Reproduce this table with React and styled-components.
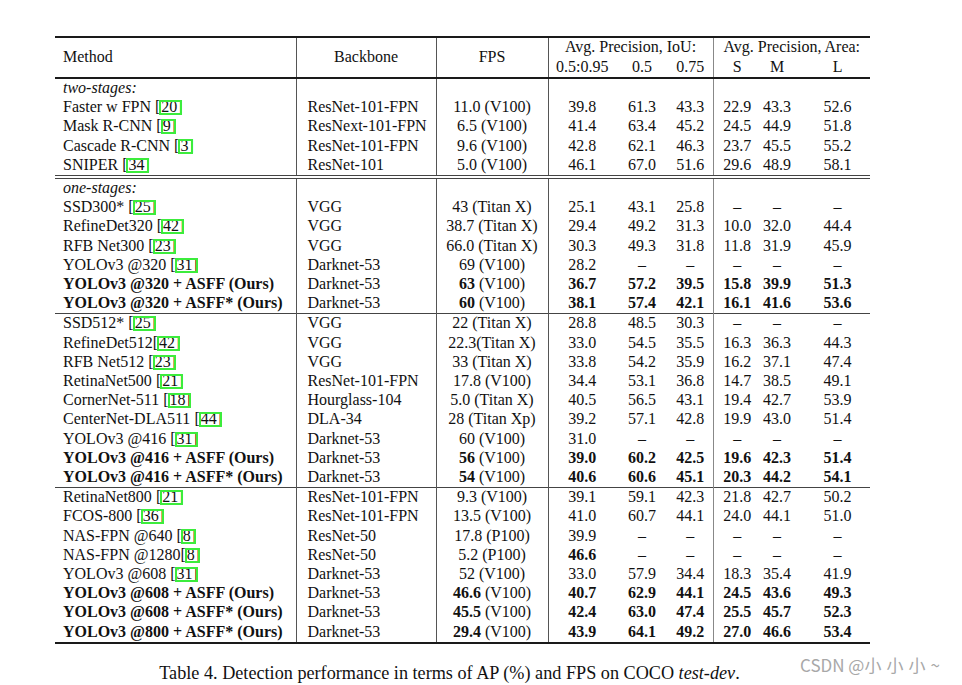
import React from "react";
import styled, { createGlobalStyle } from "styled-components";

const GlobalStyle = createGlobalStyle`
  html, body { margin: 0; padding: 0; background: #fff; }
  body { font-family: "Liberation Serif", "Times New Roman", serif; color: #111; }
`;

const Page = styled.div`
  position: relative;
  width: 962px;
  height: 685px;
  padding: 36px 0 0 55px;
  box-sizing: border-box;
  overflow: hidden;
`;

const Figure = styled.figure`
  margin: 0;
  width: 815px;
  display: flex;
  flex-direction: column;
`;

const Table = styled.table`
  width: 815px;
  table-layout: fixed;
  border-collapse: collapse;
  font-size: 16px;
  line-height: 17.2px;
  border-top: 2px solid #1a1a1a;
  border-bottom: 2px solid #1a1a1a;
`;

const HeadRow = styled.tr`
  height: 19.5px;
  border-bottom: ${(p) => (p.$last ? "2px solid #1a1a1a" : "none")};
`;

const HeadCell = styled.th`
  font-weight: normal;
  line-height: 17.5px;
  padding: 0 0 2px 0;
  text-align: ${(p) => p.$align || "center"};
  padding-left: ${(p) => p.$pad || 0}px;
  border-right: ${(p) => (p.$divider ? `1px solid ${p.$divider}` : "none")};
  vertical-align: middle;
  white-space: nowrap;
`;

const Row = styled.tr`
  height: 19.2px;
  border-top: ${(p) =>
    p.$sep === "double" ? "4px double #444" : p.$sep === "single" ? "1px solid #444" : "none"};
`;

const Cell = styled.td`
  padding: 0 0 2px 0;
  height: 17.2px;
  padding-left: ${(p) => p.$pad || 0}px;
  text-align: ${(p) => p.$align || "center"};
  font-weight: ${(p) => (p.$bold ? "bold" : "normal")};
  font-style: ${(p) => (p.$italic ? "italic" : "normal")};
  border-right: ${(p) => (p.$divider ? `1px solid ${p.$divider}` : "none")};
  white-space: nowrap;
  vertical-align: middle;
`;

const Strong = styled.b`
  font-weight: bold;
`;

const Cite = styled.span`
  position: relative;
  margin-left: 1px;
  &::after {
    content: "";
    position: absolute;
    left: -2px;
    right: -5px;
    top: 2px;
    bottom: 0px;
    border: 2px solid #3cec3c;
    pointer-events: none;
  }
`;

const Caption = styled.figcaption`
  margin-top: 19px;
  text-align: center;
  font-size: 18.2px;
  line-height: 21px;
  color: #111;
  padding-right: 26px;
`;

const Em = styled.i`
  font-style: italic;
`;

const Watermark = styled.div`
  position: absolute;
  left: 800px;
  top: 654px;
  font-family: "Noto Sans CJK SC", "Liberation Sans", sans-serif;
  font-size: 17px;
  line-height: 22px;
  color: #a8a8a8;
  white-space: nowrap;
`;

const WatermarkName = styled.span`
  letter-spacing: 5px;
`;

const D = "–";

const blocks = [
  {
    sep: null,
    label: "two-stages:",
    rows: [
      ["Faster w FPN ", "20", "ResNet-101-FPN", "11.0", "(V100)", ["39.8", "61.3", "43.3", "22.9", "43.3", "52.6"]],
      ["Mask R-CNN ", "9", "ResNext-101-FPN", "6.5", "(V100)", ["41.4", "63.4", "45.2", "24.5", "44.9", "51.8"]],
      ["Cascade R-CNN ", "3", "ResNet-101-FPN", "9.6", "(V100)", ["42.8", "62.1", "46.3", "23.7", "45.5", "55.2"]],
      ["SNIPER ", "34", "ResNet-101", "5.0", "(V100)", ["46.1", "67.0", "51.6", "29.6", "48.9", "58.1"]],
    ],
  },
  {
    sep: "double",
    label: "one-stages:",
    rows: [
      ["SSD300* ", "25", "VGG", "43", "(Titan X)", ["25.1", "43.1", "25.8", D, D, D]],
      ["RefineDet320 ", "42", "VGG", "38.7", "(Titan X)", ["29.4", "49.2", "31.3", "10.0", "32.0", "44.4"]],
      ["RFB Net300 ", "23", "VGG", "66.0", "(Titan X)", ["30.3", "49.3", "31.8", "11.8", "31.9", "45.9"]],
      ["YOLOv3 @320 ", "31", "Darknet-53", "69", "(V100)", ["28.2", D, D, D, D, D]],
      ["YOLOv3 @320 + ASFF (Ours)", null, "Darknet-53", "63", "(V100)", ["36.7", "57.2", "39.5", "15.8", "39.9", "51.3"], "all"],
      ["YOLOv3 @320 + ASFF* (Ours)", null, "Darknet-53", "60", "(V100)", ["38.1", "57.4", "42.1", "16.1", "41.6", "53.6"], "all"],
    ],
  },
  {
    sep: "single",
    rows: [
      ["SSD512* ", "25", "VGG", "22", "(Titan X)", ["28.8", "48.5", "30.3", D, D, D]],
      ["RefineDet512", "42", "VGG", "22.3", "(Titan X)", ["33.0", "54.5", "35.5", "16.3", "36.3", "44.3"]],
      ["RFB Net512 ", "23", "VGG", "33", "(Titan X)", ["33.8", "54.2", "35.9", "16.2", "37.1", "47.4"]],
      ["RetinaNet500 ", "21", "ResNet-101-FPN", "17.8", "(V100)", ["34.4", "53.1", "36.8", "14.7", "38.5", "49.1"]],
      ["CornerNet-511 ", "18", "Hourglass-104", "5.0", "(Titan X)", ["40.5", "56.5", "43.1", "19.4", "42.7", "53.9"]],
      ["CenterNet-DLA511 ", "44", "DLA-34", "28", "(Titan Xp)", ["39.2", "57.1", "42.8", "19.9", "43.0", "51.4"]],
      ["YOLOv3 @416 ", "31", "Darknet-53", "60", "(V100)", ["31.0", D, D, D, D, D]],
      ["YOLOv3 @416 + ASFF (Ours)", null, "Darknet-53", "56", "(V100)", ["39.0", "60.2", "42.5", "19.6", "42.3", "51.4"], "all"],
      ["YOLOv3 @416 + ASFF* (Ours)", null, "Darknet-53", "54", "(V100)", ["40.6", "60.6", "45.1", "20.3", "44.2", "54.1"], "all"],
    ],
  },
  {
    sep: "single",
    rows: [
      ["RetinaNet800 ", "21", "ResNet-101-FPN", "9.3", "(V100)", ["39.1", "59.1", "42.3", "21.8", "42.7", "50.2"]],
      ["FCOS-800 ", "36", "ResNet-101-FPN", "13.5", "(V100)", ["41.0", "60.7", "44.1", "24.0", "44.1", "51.0"]],
      ["NAS-FPN @640 ", "8", "ResNet-50", "17.8", "(P100)", ["39.9", D, D, D, D, D]],
      ["NAS-FPN @1280", "8", "ResNet-50", "5.2", "(P100)", ["46.6", D, D, D, D, D], [0]],
      ["YOLOv3 @608 ", "31", "Darknet-53", "52", "(V100)", ["33.0", "57.9", "34.4", "18.3", "35.4", "41.9"]],
      ["YOLOv3 @608 + ASFF (Ours)", null, "Darknet-53", "46.6", "(V100)", ["40.7", "62.9", "44.1", "24.5", "43.6", "49.3"], "all"],
      ["YOLOv3 @608 + ASFF* (Ours)", null, "Darknet-53", "45.5", "(V100)", ["42.4", "63.0", "47.4", "25.5", "45.7", "52.3"], "all"],
      ["YOLOv3 @800 + ASFF* (Ours)", null, "Darknet-53", "29.4", "(V100)", ["43.9", "64.1", "49.2", "27.0", "46.6", "53.4"], "all"],
    ],
  },
];

const widths = [241, 140, 112, 68, 52, 45, 48, 32, 77];
const V = "#555";
const V2 = "#888";

function MetricCells({ vals, bold }) {
  return vals.map((v, i) => (
    <Cell
      key={i}
      $bold={bold === "all" || (Array.isArray(bold) && bold.includes(i))}
      $divider={i === 2 ? V2 : null}
      $pad={i === 5 ? 12 : 0}
    >
      {v}
    </Cell>
  ));
}

function DataRow({ r, sep }) {
  const [name, cite, backbone, fps, dev, vals, bold] = r;
  const ours = bold === "all";
  return (
    <Row $sep={sep}>
      <Cell $align="left" $pad={8} $bold={ours} $divider={V}>
        {name}
        {cite && (
          <>
            [<Cite>{cite}</Cite>]
          </>
        )}
      </Cell>
      <Cell $align="left" $pad={11} $divider={V}>
        {backbone}
      </Cell>
      <Cell $divider={V}>
        {ours ? <Strong>{fps}</Strong> : fps}
        {fps === "22.3" ? "" : " "}
        {dev}
      </Cell>
      <MetricCells vals={vals} bold={bold} />
    </Row>
  );
}

function LabelRow({ label, sep }) {
  return (
    <Row $sep={sep}>
      <Cell $align="left" $pad={8} $italic $divider={V}>
        {label}
      </Cell>
      <Cell $divider={V} />
      <Cell $divider={V} />
      <Cell />
      <Cell />
      <Cell $divider={V2} />
      <Cell />
      <Cell />
      <Cell />
    </Row>
  );
}

export default function App() {
  return (
    <>
      <GlobalStyle />
      <Page>
        <Figure>
          <Table>
            <colgroup>
              {widths.map((w, i) => (
                <col key={i} style={{ width: w }} />
              ))}
            </colgroup>
            <thead>
              <HeadRow>
                <HeadCell rowSpan={2} $align="left" $pad={8} $divider={V}>
                  Method
                </HeadCell>
                <HeadCell rowSpan={2} $divider={V}>
                  Backbone
                </HeadCell>
                <HeadCell rowSpan={2} $divider={V}>
                  FPS
                </HeadCell>
                <HeadCell colSpan={3} $divider={V2}>
                  Avg. Precision, IoU:
                </HeadCell>
                <HeadCell colSpan={3}>Avg. Precision, Area:</HeadCell>
              </HeadRow>
              <HeadRow $last>
                <HeadCell>0.5:0.95</HeadCell>
                <HeadCell>0.5</HeadCell>
                <HeadCell $divider={V2}>0.75</HeadCell>
                <HeadCell>S</HeadCell>
                <HeadCell>M</HeadCell>
                <HeadCell $pad={12}>L</HeadCell>
              </HeadRow>
            </thead>
            {blocks.map((b, bi) => (
              <tbody key={bi}>
                {b.label && <LabelRow label={b.label} sep={b.sep} />}
                {b.rows.map((r, ri) => (
                  <DataRow key={ri} r={r} sep={!b.label && ri === 0 ? b.sep : null} />
                ))}
              </tbody>
            ))}
          </Table>
          <Caption>
            Table 4. Detection performance in terms of AP (%) and FPS on COCO <Em>test-dev</Em>.
          </Caption>
        </Figure>
        <Watermark>
          CSDN @<WatermarkName>小小小</WatermarkName>~
        </Watermark>
      </Page>
    </>
  );
}
